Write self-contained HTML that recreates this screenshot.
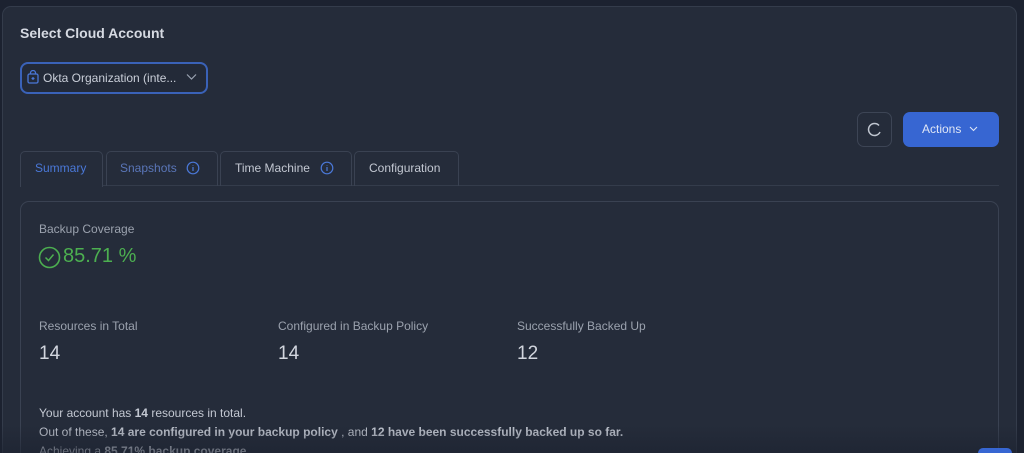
<!DOCTYPE html>
<html style="width:1024px;height:453px;overflow:hidden"><head><style>
*{box-sizing:border-box;margin:0;padding:0}
body{width:1024px;height:453px;background:#1c2230;font-family:"Liberation Sans",sans-serif;overflow:hidden;position:relative;color:#c9ced8}
.panel{position:absolute;left:2px;top:6px;width:1015px;height:447px;background:#252c3a;border:1px solid #343c4b;border-bottom:none;border-radius:9px 9px 0 0}
.abs{position:absolute}
</style></head><body>
<div class="panel"></div>
<div class="abs" style="left:20px;top:25px;font-size:14px;font-weight:bold;color:#d6dae2">Select Cloud Account</div>
<div class="abs" style="left:20px;top:62px;width:188px;height:32px;border:2px solid #3a62b8;border-radius:8px;background:#232a38"></div>
<svg class="abs" style="left:27px;top:70px" width="12" height="14" viewBox="0 0 12 14"><rect x="1" y="4" width="10" height="9" rx="1.5" fill="none" stroke="#4a78d8" stroke-width="1.3"/><path d="M3.5 4V3a2.5 2.5 0 0 1 5 0v1M6 7v3M4.5 8.5h3" fill="none" stroke="#4a78d8" stroke-width="1.2"/></svg>
<div class="abs" style="left:43px;top:71px;font-size:12px;color:#c9ced8">Okta Organization (inte...</div>
<svg class="abs" style="left:186px;top:73px" width="11" height="8" viewBox="0 0 11 8"><path d="M1 1.5l4.5 4.5 4.5-4.5" fill="none" stroke="#9aa3b2" stroke-width="1.2"/></svg>
<div class="abs" style="left:857px;top:112px;width:35px;height:35px;border:1px solid #3d4555;border-radius:7px"></div>
<svg class="abs" style="left:866px;top:121px" width="17" height="17" viewBox="0 0 17 17"><path d="M13 4.5A6 6 0 1 0 14 11" fill="none" stroke="#c0c6d0" stroke-width="1.5"/></svg>
<div class="abs" style="left:903px;top:112px;width:96px;height:35px;background:#3766d2;border-radius:7px"></div>
<div class="abs" style="left:922px;top:122px;font-size:12px;color:#dfe6f5">Actions</div>
<svg class="abs" style="left:969px;top:126px" width="9" height="6" viewBox="0 0 9 6"><path d="M1 1l3.5 3.5L8 1" fill="none" stroke="#dfe6f5" stroke-width="1.1"/></svg>
<div class="abs" style="left:20px;top:185px;width:979px;height:1px;background:#343c4b"></div>
<div class="abs" style="left:20px;top:151px;width:83px;height:36px;border:1px solid #3a4252;border-bottom:none;border-radius:5px 5px 0 0;background:#252c3a"></div>
<div class="abs" style="left:35px;top:161px;font-size:12px;color:#4a78d8">Summary</div>
<div class="abs" style="left:106px;top:151px;width:112px;height:35px;border:1px solid #3a4252;border-bottom:none;border-radius:5px 5px 0 0"></div>
<div class="abs" style="left:120px;top:161px;font-size:12px;color:#5a76b8">Snapshots</div>
<svg class="abs" style="left:186px;top:161px" width="14" height="14" viewBox="0 0 14 14"><circle cx="7" cy="7" r="5.8" fill="none" stroke="#4a78d8" stroke-width="1.2"/><path d="M7 6v4M7 4v.5" stroke="#4a78d8" stroke-width="1.2"/></svg>
<div class="abs" style="left:220px;top:151px;width:132px;height:35px;border:1px solid #3a4252;border-bottom:none;border-radius:5px 5px 0 0"></div>
<div class="abs" style="left:235px;top:161px;font-size:12px;color:#c3c8d2">Time Machine</div>
<svg class="abs" style="left:320px;top:161px" width="14" height="14" viewBox="0 0 14 14"><circle cx="7" cy="7" r="5.8" fill="none" stroke="#4a78d8" stroke-width="1.2"/><path d="M7 6v4M7 4v.5" stroke="#4a78d8" stroke-width="1.2"/></svg>
<div class="abs" style="left:354px;top:151px;width:105px;height:35px;border:1px solid #3a4252;border-bottom:none;border-radius:5px 5px 0 0"></div>
<div class="abs" style="left:369px;top:161px;font-size:12px;color:#c3c8d2">Configuration</div>
<div class="abs" style="left:20px;top:201px;width:979px;height:252px;border:1px solid #3a4252;border-bottom:none;border-radius:9px 9px 0 0"></div>
<div class="abs" style="left:39px;top:222px;font-size:12px;color:#9ba2ae">Backup Coverage</div>
<svg class="abs" style="left:38px;top:246px" width="23" height="23" viewBox="0 0 23 23"><circle cx="11.5" cy="11.5" r="10" fill="none" stroke="#4caf50" stroke-width="1.6"/><path d="M7.5 11.5l3 3 5-6" fill="none" stroke="#4caf50" stroke-width="1.5"/></svg>
<div class="abs" style="left:63px;top:245px;font-size:20px;color:#4caf50">85.71 %</div>
<div class="abs" style="left:39px;top:319px;font-size:12px;color:#9ba2ae">Resources in Total</div>
<div class="abs" style="left:278px;top:319px;font-size:12px;color:#9ba2ae">Configured in Backup Policy</div>
<div class="abs" style="left:517px;top:319px;font-size:12px;color:#9ba2ae">Successfully Backed Up</div>
<div class="abs" style="left:39px;top:343px;font-size:19px;color:#d2d6de">14</div>
<div class="abs" style="left:278px;top:343px;font-size:19px;color:#d2d6de">14</div>
<div class="abs" style="left:517px;top:343px;font-size:19px;color:#d2d6de">12</div>
<div class="abs" style="left:39px;top:404px;width:700px;height:49px;overflow:hidden;font-size:12px;color:#c3c8d2;line-height:19px">Your account has <b>14</b> resources in total.<br>Out of these, <b>14 are configured in your backup policy</b> , and <b>12 have been successfully backed up so far.</b><br>Achieving a <b>85.71% backup coverage.</b></div>
<div class="abs" style="left:0;top:425px;width:1024px;height:28px;background:linear-gradient(rgba(28,34,48,0),rgba(28,34,48,.6))"></div>
<div class="abs" style="left:978px;top:448px;width:34px;height:5px;border-radius:17px 17px 0 0;background:#3766d2"></div>
</body></html>
